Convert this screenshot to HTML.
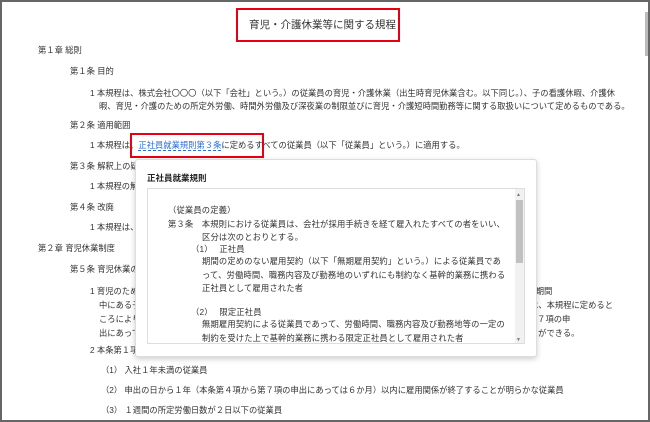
<!DOCTYPE html>
<html><head><meta charset="utf-8"><style>
*{margin:0;padding:0;box-sizing:border-box}
body{width:650px;height:422px;overflow:hidden;background:#fff;font-family:"Liberation Sans","Noto Sans CJK JP",sans-serif;color:#333;font-size:8.3px;position:relative}
.frame{position:absolute;left:0;top:0;width:650px;height:422px;border:2px solid #666;border-top-width:2px}
.t{position:absolute;white-space:nowrap;line-height:10px}
.p{letter-spacing:0.15px}
.red{position:absolute;border:2.5px solid #e60012}
.pop{position:absolute;left:135px;top:159px;width:402px;height:198px;background:#fff;border:1px solid #ddd;border-radius:3px;box-shadow:0 2px 6px rgba(0,0,0,.2)}
.inner{position:absolute;left:147px;top:188px;width:378px;height:156px;border:1px solid #ddd;background:#fff}
</style></head><body>
<div class="frame"></div>
<div style="position:absolute;left:645px;top:12px;width:3px;height:44px;background:#bbb"></div>
<div class="t" style="left:249px;top:19px;font-size:10.5px;line-height:12px">育児・介護休業等に関する規程</div>
<div class="red" style="left:236px;top:8px;width:164px;height:34px"></div>
<div class="t" style="left:38px;top:45px">第１章 総則</div>
<div class="t" style="left:70px;top:66px">第１条 目的</div>
<div class="t" style="left:90px;top:88px">1 本規程は、株式会社〇〇〇（以下「会社」という。）の従業員の育児・介護休業（出生時育児休業含む。以下同じ。）、子の看護休暇、介護休</div>
<div class="t" style="left:99px;top:101px">暇、育児・介護のための所定外労働、時間外労働及び深夜業の制限並びに育児・介護短時間勤務等に関する取扱いについて定めるものである。</div>
<div class="t" style="left:70px;top:120px">第２条 適用範囲</div>
<div class="t" style="left:90px;top:140px">1 本規程は、<span style="color:#2a6fd6;border-bottom:1px dashed #2a6fd6">正社員就業規則第３条</span>に定めるすべての従業員（以下「従業員」という。）に適用する。</div>
<div class="red" style="left:130px;top:133px;width:134px;height:25px"></div>
<div class="t" style="left:70px;top:161px">第３条 解釈上の疑義</div>
<div class="t" style="left:90px;top:181px">1 本規程の解釈</div>
<div class="t" style="left:70px;top:202px">第４条 改廃</div>
<div class="t" style="left:90px;top:222px">1 本規程は、</div>
<div class="t" style="left:38px;top:243px">第２章 育児休業制度</div>
<div class="t" style="left:70px;top:264px">第５条 育児休業の対象者</div>
<div class="t" style="left:90px;top:286px">1 育児のため休業することを希望する従業員であって、１歳に満たない子と同居し、養育する者又は特別養子縁組の監護期間</div>
<div class="t" style="left:99px;top:300px">中にある子、養子縁組里親に委託されている子等を養育する者は、この規程に定めるところにより育児休業をする者は、本規程に定めると</div>
<div class="t" style="left:99px;top:314px">ころにより育児休業をすることができる。ただし、有期雇用従業員にあっては、申出時点において、本条第６項及び第７項の申</div>
<div class="t" style="left:99px;top:328px">出にあっては、子が１歳６か月に達する日までに労働契約が満了することが明らかでない者に限り育児休業をすることができる。</div>
<div class="t" style="left:90px;top:345px">2 本条第１項にかかわらず、労使協定により除外された次の従業員からの休業の申出は拒むことができる。</div>
<div class="t" style="left:101px;top:365px">（1） 入社１年未満の従業員</div>
<div class="t" style="left:101px;top:385px">（2） 申出の日から１年（本条第４項から第７項の申出にあっては６か月）以内に雇用関係が終了することが明らかな従業員</div>
<div class="t" style="left:101px;top:405px">（3） １週間の所定労働日数が２日以下の従業員</div>
<div class="pop"></div>
<div class="t" style="left:147px;top:173px;font-weight:bold;font-size:8.5px;color:#222">正社員就業規則</div>
<div class="inner"></div>
<div style="position:absolute;left:515px;top:189px;width:9px;height:154px;background:#f1f1f1"></div>
<div style="position:absolute;left:516px;top:200px;width:7px;height:63px;background:#c1c1c1"></div>
<div class="t" style="left:516px;top:190px;font-size:5px;color:#777">▲</div>
<div class="t" style="left:516px;top:335px;font-size:5px;color:#777">▼</div>
<div class="t p" style="left:168px;top:205px">（従業員の定義）</div>
<div class="t p" style="left:168px;top:219px">第３条　本規則における従業員は、会社が採用手続きを経て雇入れたすべての者をいい、</div>
<div class="t p" style="left:202px;top:232px">区分は次のとおりとする。</div>
<div class="t p" style="left:191px;top:244px">（1）　 正社員</div>
<div class="t p" style="left:202px;top:256px">期間の定めのない雇用契約（以下「無期雇用契約」という。）による従業員であ</div>
<div class="t p" style="left:202px;top:270px">って、労働時間、職務内容及び勤務地のいずれにも制約なく基幹的業務に携わる</div>
<div class="t p" style="left:202px;top:283px">正社員として雇用された者</div>
<div class="t p" style="left:191px;top:307px">（2）　 限定正社員</div>
<div class="t p" style="left:202px;top:319px">無期雇用契約による従業員であって、労働時間、職務内容及び勤務地等の一定の</div>
<div class="t p" style="left:202px;top:333px">制約を受けた上で基幹的業務に携わる限定正社員として雇用された者</div>
</body></html>
